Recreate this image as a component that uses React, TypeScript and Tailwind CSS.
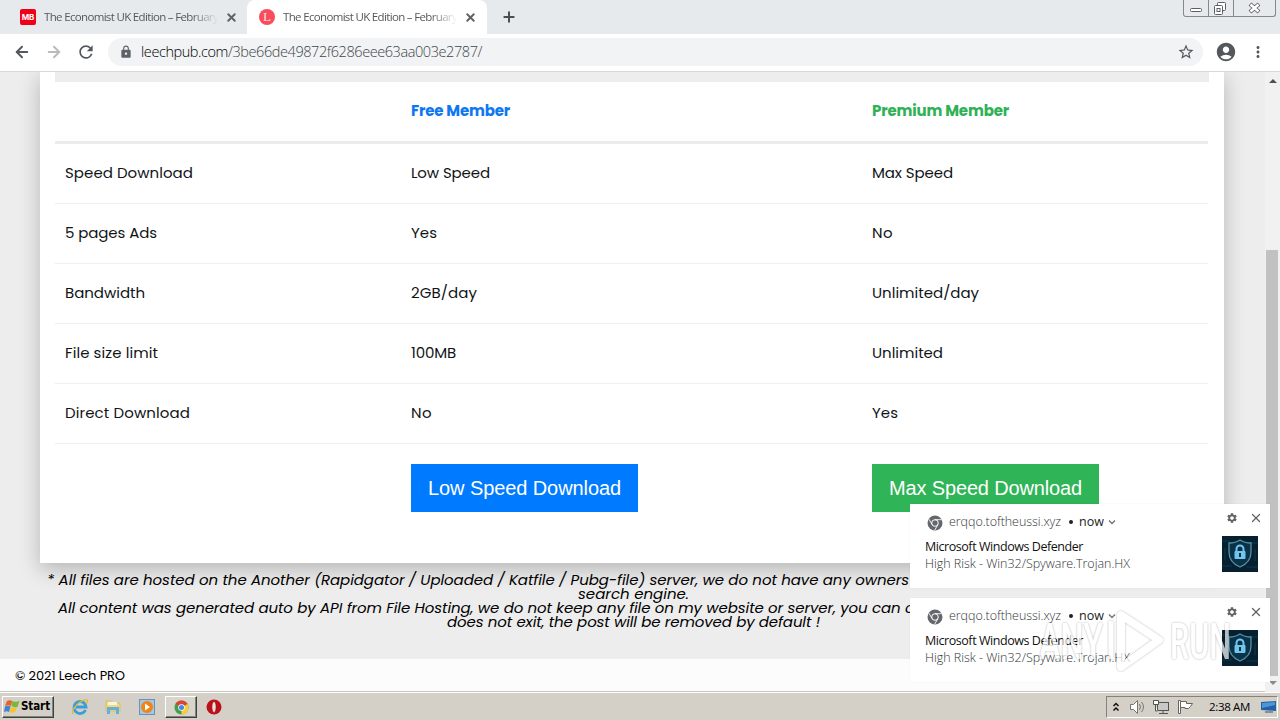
import { useLayoutEffect, useRef } from 'react'
import { ArrowLeft, ArrowRight, Plus, X } from 'lucide-react'
import { MdAccountCircle, MdLock, MdMoreVert, MdRefresh, MdSettings, MdStarBorder } from 'react-icons/md'

type FitProps = {
  text: string
  width: number
  className?: string
}

/** Single line of text whose letter spacing is adjusted to fill `width` */
function Fit({ text, width, className = '' }: FitProps) {
  const ref = useRef<HTMLSpanElement>(null)

  useLayoutEffect(() => {
    const el = ref.current
    if (!el) return
    el.style.letterSpacing = '0px'
    const natural = el.getBoundingClientRect().width
    el.style.letterSpacing = `${(width - natural) / text.length}px`
  }, [text, width])

  return (
    <span ref={ref} className={`inline-block whitespace-pre ${className}`}>
      {text}
    </span>
  )
}

const POPPINS = "font-[Poppins,Inter,'Open_Sans',sans-serif]"
const TAHOMA = "font-[Tahoma,'Open_Sans','Noto_Sans','DejaVu_Sans',sans-serif]"

type Cell = [string, number]

const rows: Cell[][] = [
  [['Speed Download', 128], ['Low Speed', 79], ['Max Speed', 81]],
  [['5 pages Ads', 92], ['Yes', 26], ['No', 21]],
  [['Bandwidth', 80], ['2GB/day', 66], ['Unlimited/day', 107]],
  [['File size limit', 93], ['100MB', 45], ['Unlimited', 71]],
  [['Direct Download', 125], ['No', 21], ['Yes', 26]],
]

function TabTitle() {
  return (
    <div className="flex w-[175px] pl-px [mask-image:linear-gradient(to_right,black_85%,transparent)]">
      <Fit text="The Economist UK Edition – February" width={174} className="-mt-px text-[11.5px] leading-4 text-[#55585c]" />
    </div>
  )
}

function TabStrip() {
  return (
    <div className="flex h-[34px] bg-[#e7eaed]">
      <div className="flex w-[247px] items-center pl-5">
        <div className="flex h-4 w-4 items-center justify-center rounded-[2px] bg-[#f00018] font-[Inter,sans-serif] text-[8px] font-bold text-white">
          MB
        </div>
        <div className="ml-[7px]">
          <TabTitle />
        </div>
        <X className="ml-[7px] h-[13px] w-[13px] text-[#5f6368]" strokeWidth={3.6} />
      </div>
      <div className="flex w-[240px] items-center rounded-t-lg bg-white pl-3">
        <div className="flex h-4 w-4 items-center justify-center rounded-full bg-[#f94d5c] font-['Liberation_Serif',serif] text-[13px] text-[#ffe4e4]">
          L
        </div>
        <div className="ml-[7px]">
          <TabTitle />
        </div>
        <X className="ml-[7px] h-[13px] w-[13px] text-[#5f6368]" strokeWidth={3.6} />
      </div>
      <Plus className="mt-[9px] ml-[14px] h-4 w-4 text-[#4b4f53]" strokeWidth={3} />
      <div className="mr-[4px] ml-auto grid h-[17px] w-[93px] grid-cols-[25px_25px_1fr] rounded-b-[3px] border border-t-0 border-[#85898e]">
        <div className="border-r border-[#85898e]">
          <svg width="24" height="16" fill="none" stroke="#5b5f64">
            <rect x="6.500" y="8.500" width="11" height="3" rx="1" fill="#fff" />
          </svg>
        </div>
        <div className="border-r border-[#85898e]">
          <svg width="24" height="16" fill="none" stroke="#5b5f64">
            <rect x="8.500" y="2.500" width="8" height="8" rx="1" fill="#fff" />
            <rect x="5.500" y="5.500" width="8" height="9" rx="1" fill="#fff" />
            <rect x="8" y="8.500" width="3" height="3" />
          </svg>
        </div>
        <svg width="41" height="16" fill="none">
          <path d="M16 4l9 8M25 4l-9 8" stroke="#5b5f64" strokeWidth="4.200" />
          <path d="M16.500 4.500l8 7M24.500 4.500l-8 7" stroke="#fff" strokeWidth="2.500" />
        </svg>
      </div>
    </div>
  )
}

function Toolbar() {
  return (
    <div className="flex h-[38px] items-center border-b border-[#d6d8da] bg-white pb-px pl-[13px]">
      <ArrowLeft className="h-[18px] w-[18px] text-[#54585c]" strokeWidth={2.6} />
      <ArrowRight className="ml-[14px] h-[18px] w-[18px] text-[#b9bbbe]" strokeWidth={2.6} />
      <MdRefresh className="ml-[13px] h-5 w-5 text-[#54585c]" />
      <div className="ml-[12px] flex h-7 w-[1095px] items-center rounded-full bg-[#f1f3f4] pl-[11px]">
        <MdLock className="h-[14px] w-[14px] text-[#5f6368]" />
        <div className="ml-2 flex flex-1 text-[14.5px] leading-5 font-light">
          <Fit text="leechpub.com" width={87} className="text-black" />
          <Fit text="/3be66de49872f6286eee63aa003e2787/" width={254} className="text-[#414549]" />
        </div>
        <MdStarBorder className="mr-[8px] h-[18px] w-[18px] text-[#54585c]" />
      </div>
      <MdAccountCircle className="ml-[12px] h-[22px] w-[22px] text-[#54585c]" />
      <MdMoreVert className="ml-[12px] h-[18px] w-[18px] text-[#54585c]" />
    </div>
  )
}

function MemberTable() {
  return (
    <div className="ml-10 h-[491px] w-[1184px] bg-white px-[15px] text-[15px] text-[#111417] shadow-[0_6px_20px_rgba(0,0,0,0.24)]">
      <div className="h-[10px] w-[1154px] bg-[#ededed]" />
      <div className="grid h-[62px] w-[1153px] grid-cols-[346px_461px_1fr] items-center border-b-[3px] border-[#ebebeb] pl-[10px] font-bold">
        <span />
        <Fit text="Free Member" width={99} className="justify-self-start text-[#0d78f2]" />
        <Fit text="Premium Member" width={137} className="justify-self-start text-[#2fb156]" />
      </div>
      {rows.map((row) => (
        <div
          key={row[0][0]}
          className="grid h-[60px] w-[1153px] grid-cols-[346px_461px_1fr] items-center border-b border-[#efefef] pl-[10px]"
        >
          {row.map(([text, width]) => (
            <Fit key={text} text={text} width={width} className="justify-self-start" />
          ))}
        </div>
      ))}
      <div className="mt-5 grid w-[1153px] grid-cols-[346px_461px_1fr] pl-[10px] font-['Liberation_Sans',Arial,sans-serif] text-[20px] text-white">
        <span />
        <button className="flex h-12 w-[227px] items-center justify-center bg-[#007bff]">
          <Fit text="Low Speed Download" width={193} />
        </button>
        <button className="flex h-12 w-[227px] items-center justify-center bg-[#2fb457]">
          <Fit text="Max Speed Download" width={193} />
        </button>
      </div>
    </div>
  )
}

function Disclaimer() {
  return (
    <div className="flex h-[96px] flex-col items-start pt-[10px] text-[15px] leading-[14px] text-black italic">
      <Fit
        text="* All files are hosted on the Another (Rapidgator / Uploaded / Katfile / Pubg-file) server, we do not have any owners"
        width={862}
        className="ml-[47px]"
      />
      <Fit text="search engine." width={111} className="ml-[578px]" />
      <Fit
        text="All content was generated auto by API from File Hosting, we do not keep any file on my website or server, you can c"
        width={856}
        className="ml-[58px]"
      />
      <Fit text="does not exit, the post will be removed by default !" width={373} className="ml-[447px]" />
    </div>
  )
}

function ChromeMono() {
  return (
    <svg viewBox="0 0 16 16" className="h-4 w-4">
      <circle cx="8" cy="8" r="7.500" fill="#64686c" />
      <circle cx="8" cy="8" r="3.300" fill="none" stroke="#fff" strokeWidth="1" />
      <path d="M8 4.700h6.500M5.100 9.600L2 4.300M10.900 9.600L7.800 15" stroke="#fff" strokeWidth="0.900" />
    </svg>
  )
}

function ShieldImage() {
  return (
    <svg viewBox="0 0 36 36" className="h-9 w-9">
      <rect width="36" height="36" fill="#06202f" />
      <path d="M0 5h8M28 7h8M0 30h10M25 31h11M3 12v12M33 13v12" stroke="#0d3a50" />
      <path
        d="M18 4c3 2 7 3 11 3v9c0 7-4 12-11 15C11 28 7 23 7 16V7c4 0 8-1 11-3z"
        fill="#0a3248"
        stroke="#5792ab"
        strokeWidth="1.300"
      />
      <path d="M14.500 16v-3a3.500 3.500 0 0 1 7 0v3" fill="none" stroke="#72c5ec" strokeWidth="2" />
      <rect x="12.500" y="15" width="11" height="8" rx="1" fill="#72c5ec" />
      <path d="M18 17v4" stroke="#0a3248" strokeWidth="2" />
    </svg>
  )
}

function Notification() {
  return (
    <div className={`h-[84px] w-[360px] bg-white pl-[15px] text-[12.5px] shadow-[0_0_2px_rgba(0,0,0,0.05)] ${TAHOMA}`}>
      <div className="flex h-[32px] items-center pt-1">
        <div className="mt-[2px] ml-[2px]">
          <ChromeMono />
        </div>
        <Fit text="erqqo.toftheussi.xyz" width={112} className="ml-[6px] font-light text-[#333639]" />
        <span className="ml-[8px] h-1 w-1 rounded-full bg-[#222]" />
        <Fit text="now" width={25} className="ml-[6px] text-[#222]" />
        <svg width="8" height="6" fill="none" stroke="#777" strokeWidth="1.500" className="ml-[4px]">
          <path d="M1 1.500l3 3 3-3" />
        </svg>
        <MdSettings className="-mt-[8px] mr-[11px] ml-auto h-3 w-3 text-[#5f6368]" />
        <X className="-mt-[8px] mr-[7px] h-[14px] w-[14px] text-[#5f6368]" strokeWidth={2.2} />
      </div>
      <div className="flex">
        <div className="flex flex-1 flex-col items-start pt-[2px] leading-[17px]">
          <Fit text="Microsoft Windows Defender" width={158} className="text-[#111]" />
          <Fit text="High Risk - Win32/Spyware.Trojan.HX" width={205} className="font-light text-[#333639]" />
        </div>
        <div className="mr-3">
          <ShieldImage />
        </div>
      </div>
    </div>
  )
}

function Watermark() {
  return (
    <div className="absolute top-[605px] left-[1038px] opacity-70">
      <svg width="200" height="72" className="drop-shadow-[0_0_1px_rgba(0,0,0,0.4)]">
        <g fill="#fff" fontFamily="Roboto, sans-serif" fontWeight="500" fontSize="50">
          <text x="1" y="54" textLength="64" lengthAdjust="spacingAndGlyphs">ANY</text>
          <text x="132" y="54" textLength="61" lengthAdjust="spacingAndGlyphs">RUN</text>
        </g>
        <path d="M73 16v38" stroke="#fff" strokeWidth="5" />
        <path d="M83 10l38 25-38 27z" fill="none" stroke="#fff" strokeWidth="8" strokeLinejoin="round" />
      </svg>
    </div>
  )
}

function ChromeLogo() {
  return (
    <svg viewBox="0 0 16 16" className="h-[15px] w-[15px]">
      <circle cx="8" cy="8" r="7.500" fill="#43a047" />
      <path d="M8 8L1.500 4.200A7.500 7.500 0 0 1 14.500 4.200z" fill="#e04334" />
      <path d="M8 8l6.500-3.800A7.500 7.500 0 0 1 8 15.500z" fill="#f9ce38" />
      <circle cx="8" cy="8" r="3.500" fill="#fff" />
      <circle cx="8" cy="8" r="2.700" fill="#4285f4" />
    </svg>
  )
}

function Taskbar() {
  return (
    <div className={`flex h-[28px] items-start border-t border-white bg-[#d4d0c8] pt-[3px] ${TAHOMA}`}>
      <div className="ml-[2px] flex h-[22px] w-[52px] items-center border border-t-white border-r-[#404040] border-b-[#404040] border-l-white pl-px shadow-[inset_-1px_-1px_#85827b]">
        <svg width="16" height="16" viewBox="0 0 16 16">
          <path d="M3 2c2-1 4-1 5 0L7 7c-2-1-4-1-6 0z" fill="#e9602a" />
          <path d="M8 2c2 1 5 1 7.500 0l-2 6c-2 1-4 0-6-1z" fill="#79b83c" />
          <path d="M1 7.500c2-1 4-1 5.500 0L5 13c-2-1-3-1-5 0z" fill="#3f83d2" />
          <path d="M7 8c2 1 4 1 6 0l-2 5c-2 1-4 1-5.500 0z" fill="#f6c22d" />
        </svg>
        <Fit text="Start" width={29} className="ml-px font-['DejaVu_Sans_Condensed','DejaVu_Sans',sans-serif] text-[11.5px] font-bold text-black" />
      </div>
      <svg width="18" height="18" viewBox="0 0 18 18" className="mt-[2px] ml-[17px]">
        <path d="M14.500 12A6 6 0 1 1 15 9H5" fill="none" stroke="#399ed9" strokeWidth="2.800" />
        <path d="M2 16C-1 12 10 1 16 2c1 1 0 3-1 4" fill="none" stroke="#e6b73e" strokeWidth="1.300" />
      </svg>
      <svg width="16" height="16" viewBox="0 0 16 16" className="mt-[3px] ml-[16px]">
        <path d="M1 2h5l1 2h8v8H1z" fill="#f1d77d" stroke="#d4b04d" strokeWidth="0.600" />
        <path d="M3 3h9v3H3z" fill="#f9f5dc" />
        <path d="M2 15V8h12v7h-3v-4H5v4z" fill="#64b1d8" />
      </svg>
      <svg width="16" height="16" viewBox="0 0 16 16" className="mt-[3px] ml-[18px]">
        <rect x="0.500" y="0.500" width="15" height="15" fill="#a5c7e6" stroke="#6792bb" />
        <circle cx="8" cy="8" r="6" fill="#f08517" />
        <path d="M6 4.500l5 3.500-5 3.500z" fill="#fff" />
      </svg>
      <div className="ml-[10px] flex h-[22px] w-8 items-center justify-center border border-t-white border-r-[#404040] border-b-[#404040] border-l-white bg-[#d8d5ce] shadow-[inset_-1px_-1px_#85827b]">
        <ChromeLogo />
      </div>
      <svg width="16" height="16" viewBox="0 0 16 16" className="mt-[3px] ml-[9px]">
        <circle cx="8" cy="8" r="7.500" fill="#bd1018" />
        <ellipse cx="8" cy="8" rx="2.100" ry="5.500" fill="#f5dede" stroke="#830b10" strokeWidth="0.600" />
      </svg>
      <div className="mr-[2px] ml-auto flex h-[22px] w-[172px] items-center border border-t-[#85827b] border-r-white border-b-white border-l-[#85827b] pl-[5px]">
        <svg width="8" height="10" fill="none" stroke="#111" strokeWidth="1.500">
          <path d="M1.500 4L4 1.500 6.500 4M1.500 8.500L4 6l2.500 2.500" />
        </svg>
        <svg width="17" height="16" fill="none" stroke="#77756f" className="ml-[9px]">
          <path d="M1.500 5.500h3l4-4v13l-4-4h-3z" fill="#fff" />
          <path d="M10.500 5q2 3 0 6M12.500 3q4 5 0 10" />
        </svg>
        <svg width="17" height="16" fill="none" stroke="#55534e" className="ml-[7px]">
          <rect x="4.500" y="3.500" width="11" height="8" fill="#c9c9c9" />
          <path d="M6 14.500h9M10 12v2" />
          <path d="M0.500 1.500h5v4h-5zM2.500 6v6h2" fill="#fff" />
        </svg>
        <svg width="17" height="16" fill="none" stroke="#66645f" className="ml-[7px]">
          <path d="M1.500 1.500h2v13h-2z" fill="#fff" />
          <path d="M3.500 2.500h6v2h6l-2 3-2 2H8v-1H3.500z" fill="#fff" />
        </svg>
        <Fit text="2:38 AM" width={41} className="ml-[15px] text-[11.5px] text-black" />
        <svg width="16" height="14" className="ml-[11px]">
          <path d="M0 2l15-1v10l-15-1z" fill="#245fa8" />
          <path d="M1 3l13-1v3L1 8z" fill="#4f95d4" />
          <path d="M4 12h8" stroke="#657b91" strokeWidth="1.500" />
        </svg>
      </div>
    </div>
  )
}

export default function App() {
  return (
    <div className="relative h-[720px] w-[1280px] overflow-hidden">
      <div className={TAHOMA}>
        <TabStrip />
        <Toolbar />
      </div>
      <div className="flex h-[620px] bg-[#ededed]">
        <div className={`w-[1265px] overflow-hidden ${POPPINS}`}>
          <MemberTable />
          <Disclaimer />
          <div className="h-[33px] border-b border-[#c9c6bf] bg-[#fcfcfc] pt-[8px] pl-[15px] text-[13px] leading-[18px] text-black">
            <Fit text="© 2021 Leech PRO" width={110} />
          </div>
        </div>
        <div className="flex w-[15px] flex-col items-center bg-[#f1f1f1]">
          <svg width="8" height="5" className="mt-[6px] shrink-0">
            <path d="M0 5l4-4 4 4z" fill="#505050" />
          </svg>
          <div className="mt-[167px] mr-px h-[426px] w-[12px] shrink-0 bg-[#c1c1c1]" />
          <svg width="8" height="5" className="mt-[5px] shrink-0">
            <path d="M0 0l4 4 4-4z" fill="#8a8a8a" />
          </svg>
        </div>
      </div>
      <Taskbar />
      <div className="absolute top-[504px] left-[910px] flex flex-col gap-[10px]">
        <Notification />
        <Notification />
      </div>
      <Watermark />
    </div>
  )
}
